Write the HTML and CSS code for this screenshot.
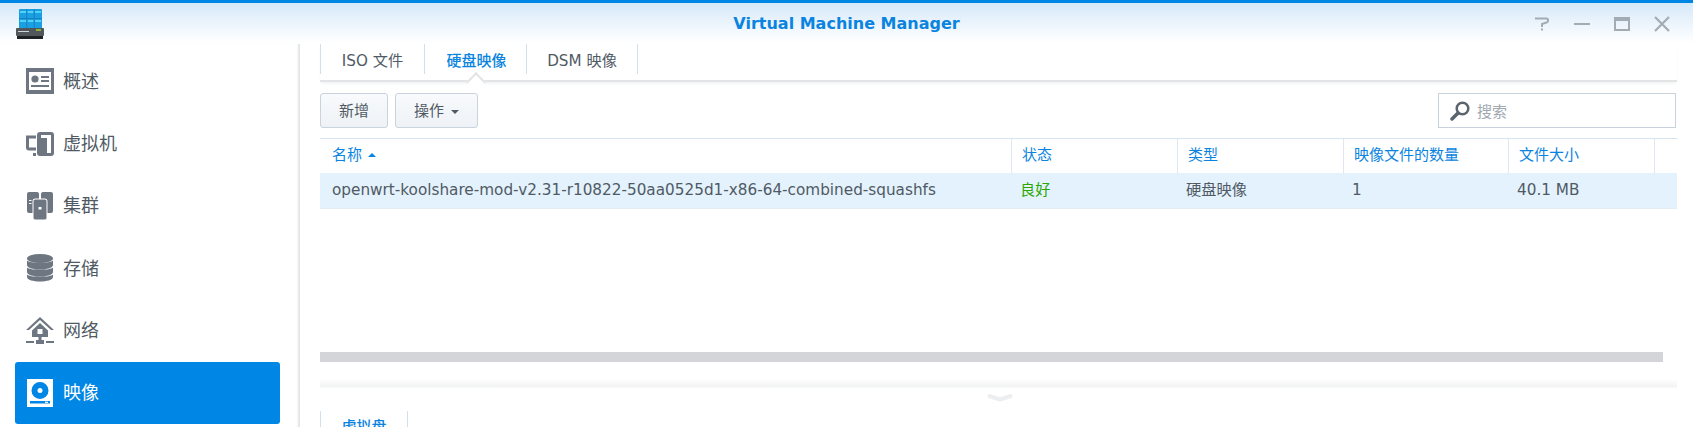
FILE: index.html
```html
<!DOCTYPE html>
<html lang="zh">
<head>
<meta charset="utf-8">
<title>Virtual Machine Manager</title>
<link rel="stylesheet" href="styles.css">
</head>
<body>
<div class="window">
  <header class="titlebar">
    <div class="logo-wrap">
      <svg class="logo" viewBox="0 0 28 30" width="28" height="30">
        <rect x="3" y="0" width="23" height="20" rx="1" fill="#1b9fe3"/>
        <g fill="#4fd0f5">
          <rect x="4" y="2" width="6" height="2"/><rect x="11.500" y="2" width="6" height="2"/><rect x="19" y="2" width="6" height="2"/>
          <rect x="4" y="11" width="6" height="2"/><rect x="11.500" y="11" width="6" height="2"/><rect x="19" y="11" width="6" height="2"/>
        </g>
        <g fill="#1680c2">
          <rect x="10.300" y="0" width="1" height="20"/><rect x="17.800" y="0" width="1" height="20"/><rect x="3" y="9" width="23" height="1"/>
        </g>
        <rect x="0" y="19" width="28" height="8" rx="1" fill="#50565a"/>
        <rect x="1" y="27" width="26" height="3" fill="#1f2224"/>
        <rect x="2" y="22" width="11" height="1" fill="#d0d4d8"/>
        <rect x="20" y="20" width="5" height="2" fill="#8fb03c"/>
      </svg>
    </div>
    <h1 class="title">Virtual Machine Manager</h1>
    <div class="controls">
      <svg viewBox="0 0 16 16" width="16" height="16"><path d="M1 2.500h11.500q1.500 0 1.500 1.500v1q0 1-1.500 1.500L8 8v3" fill="none" stroke="#a3abb3" stroke-width="2"/><rect x="7" y="12.500" width="2" height="2" fill="#a3abb3"/></svg>
      <svg viewBox="0 0 16 16" width="16" height="16"><rect x="0" y="7" width="16" height="2" fill="#a3abb3"/></svg>
      <svg viewBox="0 0 16 14" width="16" height="14"><rect x="1" y="1" width="14" height="12" fill="none" stroke="#a3abb3" stroke-width="2"/><rect x="1" y="1" width="14" height="3" fill="#a3abb3"/></svg>
      <svg viewBox="0 0 16 16" width="16" height="16"><path d="M1 1l14 14M15 1L1 15" fill="none" stroke="#a3abb3" stroke-width="2.200"/></svg>
    </div>
  </header>
  <div class="body">
    <aside class="sidebar">
      <nav class="nav">
        <a class="nav-item">
          <svg class="nav-icon" viewBox="0 0 28 28"><path fill="#6e7781" fill-rule="evenodd" d="M0 1h28v26H0zM3 5v18h22V5z"/><circle cx="9" cy="12" r="3.600" fill="#6e7781"/><path fill="#6e7781" d="M15 9h8v2h-8zM15 13h8v2h-8zM5 18h18v2H5z"/></svg>
          <span>概述</span>
        </a>
        <a class="nav-item">
          <svg class="nav-icon" viewBox="0 0 28 28"><path fill="#6e7781" d="M0 5.500h10v3H3v9h7v3H3a3 3 0 0 1-3-3z"/><path fill="#6e7781" d="M7 23h3v3H7z"/><path fill="#6e7781" fill-rule="evenodd" d="M14 2h11a3 3 0 0 1 3 3v18a3 3 0 0 1-3 3H14a3 3 0 0 1-3-3V5a3 3 0 0 1 3-3zm1 3v3h6v15h4V5z"/></svg>
          <span>虚拟机</span>
        </a>
        <a class="nav-item">
          <svg class="nav-icon" viewBox="0 0 28 28"><path fill="#6e7781" d="M3 0h8a2 2 0 0 1 2 2v5H7v14H3a2 2 0 0 1-2-2V2a2 2 0 0 1 2-2zM17 0h8a2 2 0 0 1 2 2v17a2 2 0 0 1-2 2h-4V7h-6V2a2 2 0 0 1 2-2z"/><rect x="7" y="7" width="14" height="21" rx="2" fill="#6e7781" stroke="#fff" stroke-width="1"/><rect x="12.500" y="15" width="3" height="2.500" fill="#fff"/><rect x="3" y="8" width="2.500" height="1" fill="#fff"/><rect x="3" y="11" width="2.500" height="1" fill="#fff"/></svg>
          <span>集群</span>
        </a>
        <a class="nav-item">
          <svg class="nav-icon" viewBox="0 0 28 28"><ellipse cx="14" cy="4.500" rx="13" ry="4.500" fill="#6e7781"/><path fill="#6e7781" d="M1 6.500c2 3 24 3 26 0v4.500c0 6-26 6-26 0zM1 13.500c2 3 24 3 26 0V18c0 6-26 6-26 0zM1 20.500c2 3 24 3 26 0V23c0 6-26 6-26 0z"/></svg>
          <span>存储</span>
        </a>
        <a class="nav-item">
          <svg class="nav-icon" viewBox="0 0 28 28"><path fill="#6e7781" d="M14 0L0 13h3L14 3l11 10h3z"/><path fill="#6e7781" fill-rule="evenodd" d="M14 6l8 7.500V20H6v-6.500zM11.500 12v5h5v-5z"/><path fill="#6e7781" d="M12.500 20h3v3h-3zM0 24h8v2H0zM10 23h8v4h-8zM20 24h8v2h-8z"/></svg>
          <span>网络</span>
        </a>
        <a class="nav-item active">
          <svg class="nav-icon" viewBox="0 0 26 28"><path fill="#fff" fill-rule="evenodd" d="M0 0h26v28H0zM13 3a8.500 8.500 0 1 0 0 17 8.500 8.500 0 0 0 0-17zM3 22v2.500h20V22z"/><circle cx="13" cy="11.500" r="2.500" fill="#fff"/><rect x="18" y="22.700" width="3" height="1.200" fill="#fff"/></svg>
          <span>映像</span>
        </a>
      </nav>
    </aside>
    <main class="main">
      <div class="tabs">
        <a class="tab tab-first">ISO 文件</a>
        <a class="tab tab-on">硬盘映像</a>
        <a class="tab">DSM 映像</a>
      </div>
      <div class="toolbar">
        <button class="btn btn-add"><span>新增</span></button>
        <button class="btn btn-op"><span>操作</span><i class="caret"></i></button>
        <div class="search">
          <svg viewBox="0 0 20 20" width="20" height="20"><circle cx="12.500" cy="7.500" r="5.800" fill="none" stroke="#5c656e" stroke-width="2.500"/><path d="M8 12l-6 6" stroke="#5c656e" stroke-width="3.500" stroke-linecap="round"/></svg>
          <span>搜索</span>
        </div>
      </div>
      <div class="grid">
        <div class="row head">
          <div class="cell">名称<i class="sort"></i></div>
          <div class="cell">状态</div>
          <div class="cell">类型</div>
          <div class="cell">映像文件的数量</div>
          <div class="cell">文件大小</div>
          <div class="cell"></div>
        </div>
        <div class="row data">
          <div class="cell">openwrt-koolshare-mod-v2.31-r10822-50aa0525d1-x86-64-combined-squashfs</div>
          <div class="cell good">良好</div>
          <div class="cell">硬盘映像</div>
          <div class="cell">1</div>
          <div class="cell">40.1 MB</div>
          <div class="cell"></div>
        </div>
      </div>
      <div class="scrollbar"></div>
      <div class="splitter"><svg class="chevron" viewBox="0 0 26 8" width="26" height="8"><path d="M2.500 2L13 5.500 23.500 2" fill="none" stroke="#eceef0" stroke-width="4" stroke-linecap="round" stroke-linejoin="round"/></svg></div>
      <div class="subtabs"><a class="subtab">虚拟盘</a></div>
    </main>
  </div>
</div>
</body>
</html>
```
FILE: styles.css
```css
* { box-sizing: border-box; }
html, body { margin: 0; padding: 0; background: #fff; }
body { font-family: "DejaVu Sans", "Noto Sans CJK SC", sans-serif; color: #505a64; }
.window { width: 1693px; height: 427px; overflow: hidden; display: flex; flex-direction: column; }

.titlebar {
  flex: none; height: 44px; border-top: 3px solid #0086e5;
  background: linear-gradient(#d7e9f9, #fff 98%);
  display: grid; grid-template-columns: 1fr auto 1fr; align-items: center;
}
.logo-wrap { padding-left: 16px; display: flex; align-items: center; height: 36px; }
.title { margin: 0; font-size: 16px; font-weight: 700; color: #0a84e0; line-height: 1; }
.controls { display: flex; align-items: center; justify-content: flex-end; gap: 24px; padding-right: 23px; margin-top: 1px; }

.body { flex: 1; display: flex; min-height: 0; }
.sidebar { flex: none; width: 300px; border-right: 1px solid #e4e5e7; box-shadow: inset -2px 0 2px -1px #e2e3e5; padding: 6px 0 0 15px; }
.nav { width: 265px; display: flex; flex-direction: column; }
.nav-item { height: 62.400px; display: flex; align-items: center; gap: 9px; padding-left: 11px; font-size: 18px; color: #505a64; border-radius: 3px; }
.nav-item span { padding-bottom: 3px; }
.nav-item.active { height: 62px; background: #0086e5; color: #fff; }
.nav-icon { width: 28px; height: 28px; flex: none; }

.main { flex: none; width: 1357px; margin-left: 20px; display: flex; flex-direction: column; }

.tabs { flex: none; height: 38px; display: flex; border-bottom: 2px solid #e3e4e6; box-shadow: 0 2px 3px -1px #eceef0; position: relative; font-size: 15.200px; }
.tab { height: 30px; display: flex; align-items: center; justify-content: center; border-right: 1px solid #d3dfea; color: #505a64; }
.tab-first { width: 105px; border-left: 1px solid #d3dfea; }
.tab-on { width: 102px; color: #0a84e0; font-weight: 500; font-size: 15px; padding-left: 2px; position: relative; }
.tab-on::after {
  content: ""; position: absolute; left: 44px; top: 31px; width: 12px; height: 12px;
  background: #fff; border-left: 2px solid #e3e4e6; border-top: 2px solid #e3e4e6;
  transform: rotate(45deg); z-index: 1;
}
.tab:last-child { width: 111px; }

.toolbar { flex: none; display: flex; gap: 7px; padding-top: 11px; align-items: flex-start; height: 56px; position: relative; z-index: 2; }
.btn {
  height: 35px; border: 1px solid #c8d3de; border-radius: 3px; background: linear-gradient(#f8fafc, #eef2f6);
  font: 15px "DejaVu Sans", "Noto Sans CJK SC", sans-serif; color: #505a64; padding: 0 0 2px; display: flex; align-items: center; justify-content: center;
}
.btn-add { width: 68px; }
.btn-op { width: 83px; }
.caret { width: 0; height: 0; margin-left: 7px; margin-top: 4px; border: 4px solid transparent; border-top-color: #505a64; border-bottom: 0; }
.search { margin-left: auto; margin-right: 1px; width: 238px; height: 35px; border: 1px solid #c8d3de; display: flex; align-items: center; gap: 7px; padding-left: 11px; font-size: 15px; color: #a0a8b0; }

.grid { flex: none; height: 214px; font-size: 15.250px; }
.row { display: grid; grid-template-columns: 692px 166px 166px 165px 146px 22px; }
.head { height: 35px; border-top: 1px solid #d7e3ef; color: #0a84e0; font-size: 15px; }
.head .cell { padding-left: 12px; padding-bottom: 2px; border-right: 1px solid #dfe8f1; }
.head .cell:nth-child(n+2) { padding-left: 10px; }
.head .cell:last-child { border-right: 0; }
.cell { display: flex; align-items: center; white-space: nowrap; line-height: 20px; }
.sort { width: 0; height: 0; margin-left: 6px; border: 4px solid transparent; border-bottom-color: #0a84e0; border-top: 0; }
.data { height: 36px; background: #e4f2fd; border-bottom: 1px solid #e2ecf4; }
.data .cell { padding-left: 12px; padding-bottom: 1px; }
.data .cell:nth-child(n+2) { padding-left: 8px; }
.good { color: #2ea800; }

.scrollbar { flex: none; width: 1343px; height: 10px; background: #d3d5d8; }
.splitter { flex: none; height: 49px; background: linear-gradient(#fff 17px, #f2f3f4 25px, #fff 26px); position: relative; }
.chevron { position: absolute; left: 667px; top: 32px; }
.subtabs { flex: none; display: flex; height: 30px; }
.subtab { width: 88px; height: 30px; border: 1px solid #d3dfea; border-width: 0 1px; display: flex; justify-content: center; padding-top: 4px; font-size: 15px; color: #0a84e0; font-weight: 500; }
```
